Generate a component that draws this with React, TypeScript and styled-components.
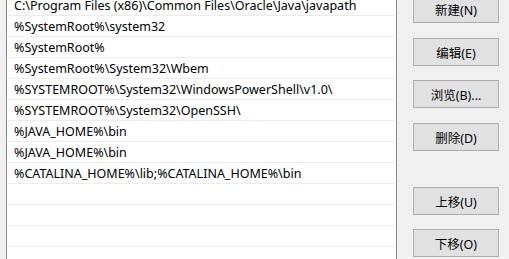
import styled, { createGlobalStyle } from "styled-components"

const paths = [
    "C:\\Program Files (x86)\\Common Files\\Oracle\\Java\\javapath",
    "%SystemRoot%\\system32",
    "%SystemRoot%",
    "%SystemRoot%\\System32\\Wbem",
    "%SYSTEMROOT%\\System32\\WindowsPowerShell\\v1.0\\",
    "%SYSTEMROOT%\\System32\\OpenSSH\\",
    "%JAVA_HOME%\\bin",
    "%JAVA_HOME%\\bin",
    "%CATALINA_HOME%\\lib;%CATALINA_HOME%\\bin",
    "",
    "",
    "",
    "",
]

const buttons = [
    { label: "新建(N)", space: -5 },
    { label: "编辑(E)", space: 15 },
    { label: "浏览(B)...", space: 14 },
    { label: "删除(D)", space: 15 },
    { label: "上移(U)", space: 36 },
    { label: "下移(O)", space: 14 },
]

const App = () => {
    return (
        <>
            <GlobalStyle />
            <Dialog>
                <PathList>
                    <Rows>
                        {paths.map((p, i) => (
                            <Row key={i}>{p}</Row>
                        ))}
                    </Rows>
                </PathList>
                <ButtonColumn>
                    {buttons.map((b) => (
                        <Button key={b.label} $space={b.space}>
                            {b.label}
                        </Button>
                    ))}
                </ButtonColumn>
            </Dialog>
        </>
    )
}

export default App

const GlobalStyle = createGlobalStyle`
    html, body {
        margin: 0;
        padding: 0;
        background: #f0f0f0;
    }
    body {
        font-family: "Noto Sans", "Noto Sans CJK SC", sans-serif;
        font-size: 12px;
        color: #000;
    }
`

const Dialog = styled.div`
    display: flex;
    height: 259px;
    width: 509px;
    overflow: hidden;
`

const PathList = styled.div`
    margin-left: 6px;
    width: 389px;
    height: 100%;
    background: #fff;
    border-left: 1px solid #828790;
    border-right: 1px solid #828790;
    overflow: hidden;
`

const Rows = styled.div`
    margin-top: -5px;
    padding: 0 1px;
`

const Row = styled.div`
    height: 20px;
    border-bottom: 1px solid #ececec;
    padding-left: 6px;
    line-height: 22px;
    font-size: 12.5px;
    white-space: nowrap;
`

const ButtonColumn = styled.div`
    display: flex;
    flex-direction: column;
    margin-left: 16px;
`

const Button = styled.div<{ $space: number }>`
    box-sizing: border-box;
    width: 86px;
    height: 28px;
    margin-top: ${(p) => p.$space}px;
    background: #e1e1e1;
    border: 1px solid #adadad;
    display: flex;
    align-items: center;
    justify-content: center;
    font-size: 12.5px;
`
